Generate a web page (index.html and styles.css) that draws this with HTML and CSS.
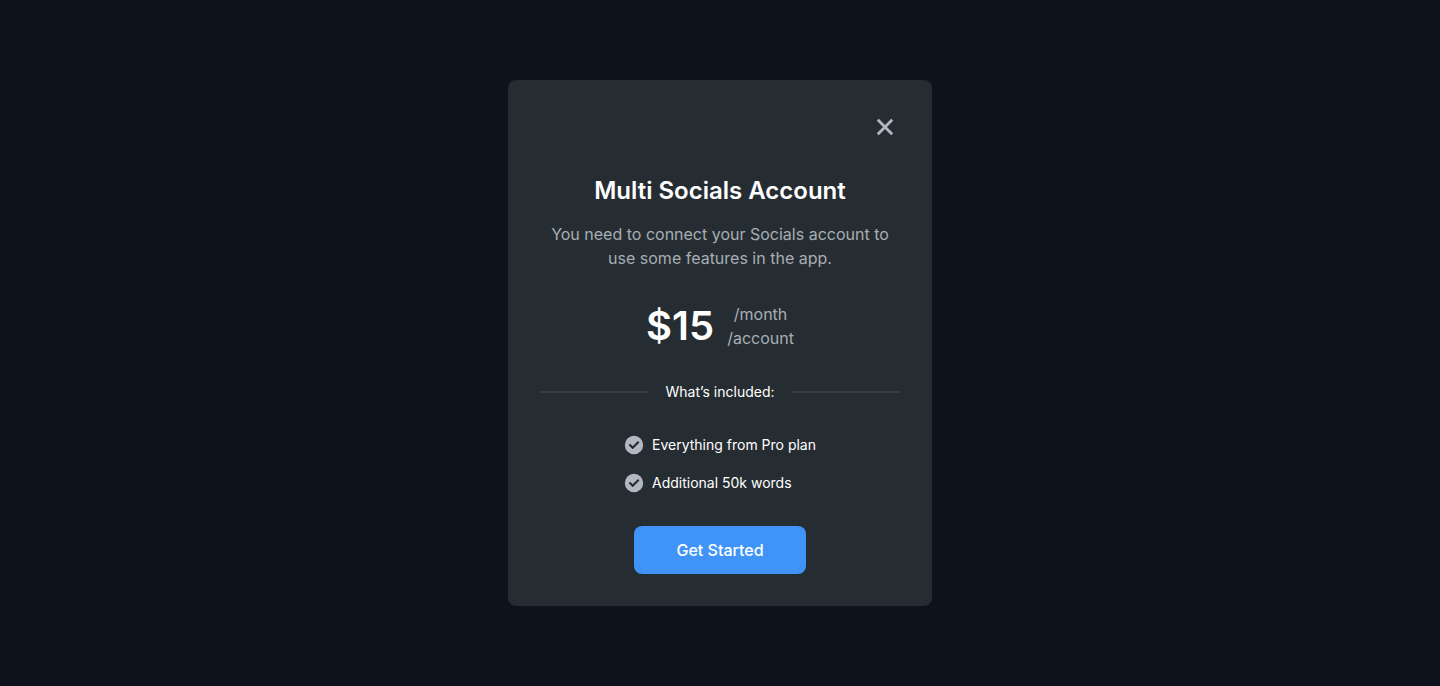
FILE: index.html
```html
<!DOCTYPE html>
<html lang="en">
<head>
<meta charset="utf-8">
<meta name="viewport" content="width=device-width, initial-scale=1">
<title>Multi Socials Account</title>
<link rel="stylesheet" href="styles.css">
</head>
<body>
<main class="page">
  <section class="card" role="dialog" aria-labelledby="card-title">
    <div class="card-top">
      <button class="close" type="button" aria-label="Close">
        <svg viewBox="0 0 18 18" width="18" height="18" aria-hidden="true"><path d="M1.8 1.8l14.4 14.4M16.2 1.8L1.8 16.2" fill="none" stroke="currentColor" stroke-width="2.8"/></svg>
      </button>
    </div>
    <h1 class="title" id="card-title">Multi Socials Account</h1>
    <p class="description">You need to connect your Socials account to use some features in the app.</p>
    <div class="price">
      <strong class="amount">$15</strong>
      <p class="period">/month<br>/account</p>
    </div>
    <h2 class="divider">What’s included:</h2>
    <ul class="features">
      <li class="feature">
        <svg class="check" viewBox="0 0 20 20" aria-hidden="true"><circle cx="10" cy="10" r="9.2" fill="currentColor"/><path d="M5.4 9.5l3.3 3.3 6-6" fill="none" stroke="#262d32" stroke-width="2.1"/></svg>
        Everything from Pro plan
      </li>
      <li class="feature">
        <svg class="check" viewBox="0 0 20 20" aria-hidden="true"><circle cx="10" cy="10" r="9.2" fill="currentColor"/><path d="M5.4 9.5l3.3 3.3 6-6" fill="none" stroke="#262d32" stroke-width="2.1"/></svg>
        Additional 50k words
      </li>
    </ul>
    <button class="start" type="button">Get Started</button>
  </section>
</main>
</body>
</html>
```

FILE: styles.css
```css
* {
  box-sizing: border-box;
}

body {
  margin: 0;
  background: #0d121c;
  color: #fff;
  font-family: Inter, "Liberation Sans", sans-serif;
}

h1, h2, p, ul {
  margin: 0;
  padding: 0;
  font-weight: 400;
}

.page {
  display: flex;
  align-items: center;
  justify-content: center;
  min-height: 100vh;
  padding: 24px;
}

.card {
  display: flex;
  flex-direction: column;
  align-items: center;
  width: 100%;
  max-width: 424px;
  padding: 32px;
  border-radius: 8px;
  background: #262d32;
}

.card-top {
  display: flex;
  justify-content: flex-end;
  align-self: stretch;
  margin-bottom: 32px;
}

.close {
  display: grid;
  place-items: center;
  width: 30px;
  height: 30px;
  padding: 0;
  border: 0;
  background: none;
  color: #b1b8c1;
  cursor: pointer;
}

.title {
  margin-bottom: 14px;
  font-size: 24px;
  line-height: 34px;
  font-weight: 600;
}

.description {
  max-width: 344px;
  margin-bottom: 32px;
  color: #a8adb4;
  font-size: 16px;
  line-height: 24px;
  text-align: center;
}

.price {
  display: flex;
  align-items: center;
  gap: 13px;
  margin-bottom: 32px;
}

.amount {
  font-size: 40px;
  line-height: 48px;
  font-weight: 600;
}

.period {
  color: #a8adb4;
  font-size: 16px;
  line-height: 24px;
  text-align: center;
}

.divider {
  display: flex;
  align-items: center;
  align-self: stretch;
  gap: 16px;
  margin-bottom: 32px;
  font-size: 14px;
  line-height: 20px;
}

.divider::before,
.divider::after {
  content: "";
  flex: 1;
  height: 2px;
  background: #353b45;
}

.features {
  display: flex;
  flex-direction: column;
  gap: 16px;
  margin-bottom: 32px;
  list-style: none;
}

.feature {
  display: flex;
  align-items: center;
  gap: 8px;
  font-size: 14px;
  line-height: 22px;
}

.check {
  width: 20px;
  height: 20px;
  color: #b1b8c1;
}

.start {
  min-height: 48px;
  padding: 12px 42px;
  border: 0;
  border-radius: 8px;
  background: #4094f7;
  color: #fff;
  font-family: inherit;
  font-size: 16px;
  line-height: 24px;
  font-weight: 500;
  cursor: pointer;
}
```
